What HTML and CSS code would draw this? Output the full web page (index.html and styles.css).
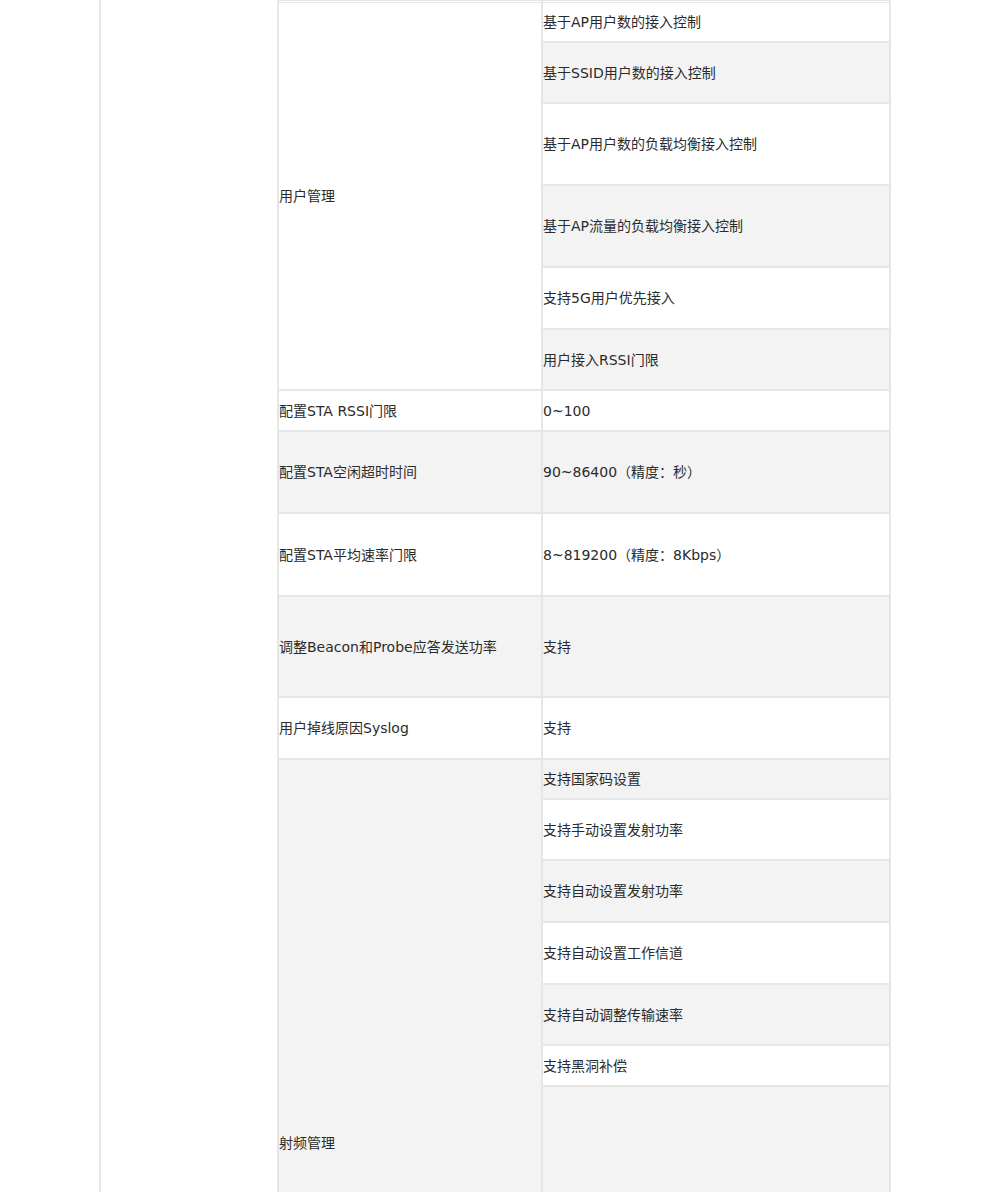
FILE: index.html
```html
<!DOCTYPE html>
<html lang="zh-CN">
<head>
    <meta charset="UTF-8">
    <meta name="viewport" content="width=device-width, initial-scale=1.0">
    <title>产品规格</title>
    <link rel="stylesheet" href="styles.css">
</head>
<body>
    <table class="spec">
        <colgroup>
            <col class="c1">
            <col class="c2">
            <col class="c3">
        </colgroup>
        <tbody>
            <tr class="h42 first">
                <td rowspan="18" class="side"></td>
                <td rowspan="6">用户管理</td>
                <td>基于AP用户数的接入控制</td>
            </tr>
            <tr class="h61 gray">
                <td>基于SSID用户数的接入控制</td>
            </tr>
            <tr class="h82">
                <td>基于AP用户数的负载均衡接入控制</td>
            </tr>
            <tr class="h82 gray">
                <td>基于AP流量的负载均衡接入控制</td>
            </tr>
            <tr class="h62">
                <td>支持5G用户优先接入</td>
            </tr>
            <tr class="h61 gray">
                <td>用户接入RSSI门限</td>
            </tr>
            <tr class="h41">
                <td>配置STA RSSI门限</td>
                <td>0~100</td>
            </tr>
            <tr class="h82 gray">
                <td>配置STA空闲超时时间</td>
                <td>90~86400（精度：秒）</td>
            </tr>
            <tr class="h83">
                <td>配置STA平均速率门限</td>
                <td>8~819200（精度：8Kbps）</td>
            </tr>
            <tr class="h101 gray">
                <td>调整Beacon和Probe应答发送功率</td>
                <td>支持</td>
            </tr>
            <tr class="h62">
                <td>用户掉线原因Syslog</td>
                <td>支持</td>
            </tr>
            <tr class="h40 gray">
                <td rowspan="7">射频管理</td>
                <td>支持国家码设置</td>
            </tr>
            <tr class="h61">
                <td>支持手动设置发射功率</td>
            </tr>
            <tr class="h62 gray">
                <td>支持自动设置发射功率</td>
            </tr>
            <tr class="h62">
                <td>支持自动设置工作信道</td>
            </tr>
            <tr class="h61 gray">
                <td>支持自动调整传输速率</td>
            </tr>
            <tr class="h41">
                <td>支持黑洞补偿</td>
            </tr>
            <tr class="h440 gray">
                <td></td>
            </tr>
        </tbody>
    </table>
</body>
</html>
```
FILE: styles.css
```css
body {
    margin: 0;
    background: #fff;
    font-family: "DejaVu Sans", "Noto Sans CJK SC", sans-serif;
    font-size: 14px;
    color: #2b2b2b;
}
.spec {
    width: 792px;
    margin: 0 auto;
    table-layout: fixed;
    border-collapse: separate;
    border-spacing: 0;
    border: 1px solid #e6e6e6;
    border-top: 0;
}
.c1 {
    width: 178px;
}
.c2 {
    width: 264px;
}
.c3 {
    width: 348px;
}
td {
    border: 1px solid #e6e6e6;
    padding: 0;
    vertical-align: middle;
    line-height: 20px;
}
.gray td {
    background: #f3f3f3;
}
.first td {
    border-top: 3px double #e6e6e6;
}
.first .side {
    border-top: 0;
    background: #fff;
}

.h40 { height: 40px; }
.h41 { height: 41px; }
.h42 { height: 42px; }
.h61 { height: 61px; }
.h62 { height: 62px; }
.h82 { height: 82px; }
.h83 { height: 83px; }
.h101 { height: 101px; }
.h440 { height: 440px; }
```
